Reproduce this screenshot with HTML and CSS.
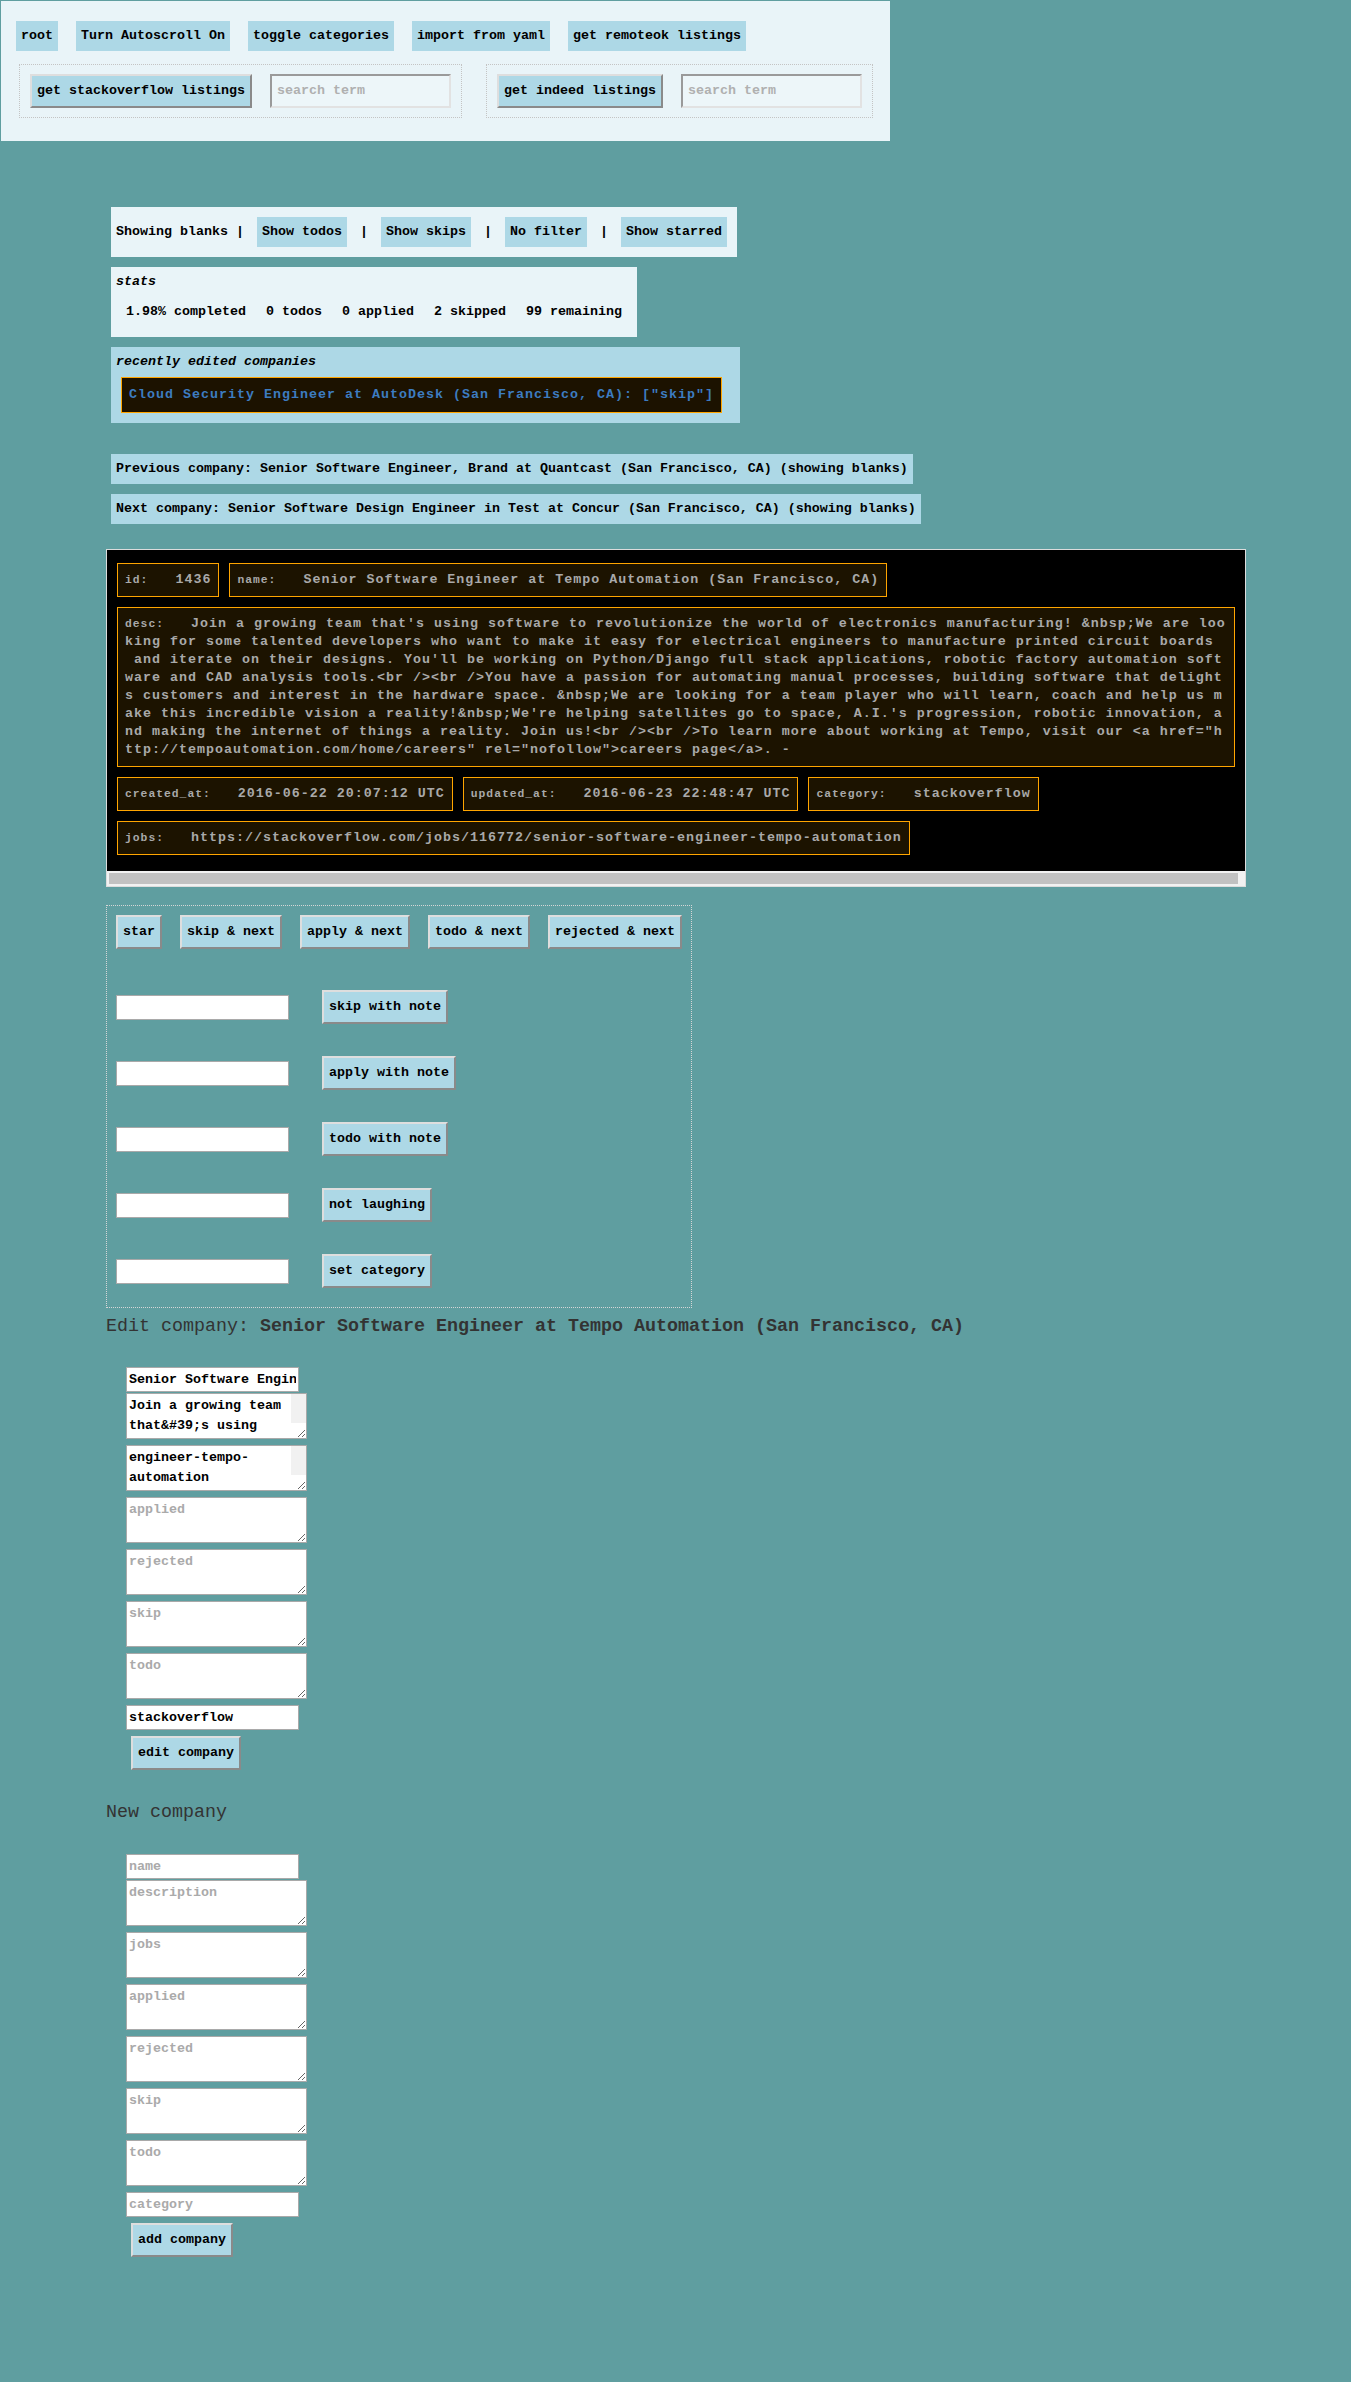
FILE: index.html
```html
<!DOCTYPE html>
<html lang="en">
<head>
<meta charset="utf-8">
<title>Companies</title>
<link rel="stylesheet" href="styles.css">
</head>
<body>
<div class="topbar">
  <div class="toprow">
    <button class="btn-flat">root</button>
    <button class="btn-flat">Turn Autoscroll On</button>
    <button class="btn-flat">toggle categories</button>
    <button class="btn-flat">import from yaml</button>
    <button class="btn-flat">get remoteok listings</button>
  </div>
  <div class="fetchrow">
    <form class="fetch">
      <button type="button" class="btn-raised">get stackoverflow listings</button>
      <input class="search" type="text" placeholder="search term">
    </form>
    <form class="fetch">
      <button type="button" class="btn-raised">get indeed listings</button>
      <input class="search" type="text" placeholder="search term">
    </form>
  </div>
</div>

<main class="main">
  <div class="filters">Showing blanks | <button class="btn-flat">Show todos</button> | <button class="btn-flat">Show skips</button> | <button class="btn-flat">No filter</button> | <button class="btn-flat">Show starred</button></div>

  <div class="stats">
    <div class="italic-title">stats</div>
    <div class="stats-row">
      <span>1.98% completed</span>
      <span>0 todos</span>
      <span>0 applied</span>
      <span>2 skipped</span>
      <span>99 remaining</span>
    </div>
  </div>

  <div class="recent">
    <div class="italic-title">recently edited companies</div>
    <div class="recent-item">Cloud Security Engineer at AutoDesk (San Francisco, CA): ["skip"]</div>
  </div>

  <div class="nav">Previous company: Senior Software Engineer, Brand at Quantcast (San Francisco, CA) (showing blanks)</div>
  <div class="nav nav-next">Next company: Senior Software Design Engineer in Test at Concur (San Francisco, CA) (showing blanks)</div>

  <div class="card">
    <div class="card-body">
      <div class="field"><span class="label">id:</span>   1436</div>
      <div class="field"><span class="label">name:</span>   Senior Software Engineer at Tempo Automation (San Francisco, CA)</div>
      <div class="field field-desc"><span class="label">desc:</span>   Join a growing team that's using software to revolutionize the world of electronics manufacturing! &amp;nbsp;We are looking for some talented developers who want to make it easy for electrical engineers to manufacture printed circuit boards  and iterate on their designs. You'll be working on Python/Django full stack applications, robotic factory automation software and CAD analysis tools.&lt;br /&gt;&lt;br /&gt;You have a passion for automating manual processes, building software that delights customers and interest in the hardware space. &amp;nbsp;We are looking for a team player who will learn, coach and help us make this incredible vision a reality!&amp;nbsp;We're helping satellites go to space, A.I.'s progression, robotic innovation, and making the internet of things a reality. Join us!&lt;br /&gt;&lt;br /&gt;To learn more about working at Tempo, visit our &lt;a href="http://tempoautomation.com/home/careers" rel="nofollow"&gt;careers page&lt;/a&gt;. -</div>
      <div class="field"><span class="label">created_at:</span>   2016-06-22 20:07:12 UTC</div>
      <div class="field"><span class="label">updated_at:</span>   2016-06-23 22:48:47 UTC</div>
      <div class="field"><span class="label">category:</span>   stackoverflow</div>
      <div class="field"><span class="label">jobs:</span>   https://stackoverflow.com/jobs/116772/senior-software-engineer-tempo-automation</div>
    </div>
    <div class="hscroll"><div class="hscroll-thumb"></div></div>
  </div>

  <div class="actions">
    <div class="action-buttons">
      <button class="btn-raised">star</button>
      <button class="btn-raised">skip &amp; next</button>
      <button class="btn-raised">apply &amp; next</button>
      <button class="btn-raised">todo &amp; next</button>
      <button class="btn-raised">rejected &amp; next</button>
    </div>
    <div class="note-rows">
      <form class="note-row"><input class="note-input" type="text"><button type="button" class="btn-raised">skip with note</button></form>
      <form class="note-row"><input class="note-input" type="text"><button type="button" class="btn-raised">apply with note</button></form>
      <form class="note-row"><input class="note-input" type="text"><button type="button" class="btn-raised">todo with note</button></form>
      <form class="note-row"><input class="note-input" type="text"><button type="button" class="btn-raised">not laughing</button></form>
      <form class="note-row"><input class="note-input" type="text"><button type="button" class="btn-raised">set category</button></form>
    </div>
  </div>

  <h3 class="heading heading-edit">Edit company: <b>Senior Software Engineer at Tempo Automation (San Francisco, CA)</b></h3>
  <form class="company-form form-edit">
    <input class="text-input" type="text" value="Senior Software Engineer at Tempo Automation (San Francisco, CA)">
    <textarea class="area area-scroll">Join a growing team that&amp;#39;s using software to revolutionize the world of electronics manufacturing! &amp;nbsp;We are looking for some talented developers who want to make it easy for electrical engineers to manufacture printed circuit boards and iterate on their designs.</textarea>
    <textarea class="area area-scroll scroll-end">https://stackoverflow.com/jobs/116772/senior-software-engineer-tempo-automation</textarea>
    <textarea class="area" placeholder="applied"></textarea>
    <textarea class="area" placeholder="rejected"></textarea>
    <textarea class="area" placeholder="skip"></textarea>
    <textarea class="area" placeholder="todo"></textarea>
    <input class="text-input" type="text" value="stackoverflow">
    <button type="button" class="btn-raised form-submit">edit company</button>
  </form>

  <h3 class="heading heading-new">New company</h3>
  <form class="company-form form-new">
    <input class="text-input" type="text" placeholder="name">
    <textarea class="area" placeholder="description"></textarea>
    <textarea class="area" placeholder="jobs"></textarea>
    <textarea class="area" placeholder="applied"></textarea>
    <textarea class="area" placeholder="rejected"></textarea>
    <textarea class="area" placeholder="skip"></textarea>
    <textarea class="area" placeholder="todo"></textarea>
    <input class="text-input" type="text" placeholder="category">
    <button type="button" class="btn-raised form-submit">add company</button>
  </form>
</main>
<script src="script.js"></script>
</body>
</html>
```

FILE: styles.css
```css
* {
  box-sizing: border-box;
}

html,
body {
  margin: 0;
}

body {
  background: #5f9ea0;
  font-family: "Liberation Mono", "DejaVu Sans Mono", monospace;
  font-size: 13.333px;
  font-weight: 700;
  line-height: 20px;
  color: #000;
  min-height: 2382px;
}

button,
input,
textarea {
  font-family: inherit;
  font-size: 13.333px;
  font-weight: 700;
  line-height: 20px;
  color: #000;
  margin: 0;
}

/* ---------- top panel ---------- */
.topbar {
  width: fit-content;
  margin: 1px 0 0 1px;
  padding: 20px 17px 23px 15px;
  background: #e9f4f8;
}

.toprow {
  display: flex;
  gap: 18px;
}

.btn-flat {
  background: #add8e6;
  border: 0;
  border-radius: 0;
  padding: 5px;
}

.btn-raised {
  background: #add8e6;
  border: 2px solid;
  border-color: #dedede #8a8a8a #8a8a8a #dedede;
  border-radius: 0;
  padding: 5px;
}

.fetchrow {
  display: flex;
  gap: 24px;
  margin: 13px 0 0 3px;
}

.fetch {
  display: flex;
  gap: 18px;
  border: 1px dotted #c4c4c4;
  padding: 9px 10px;
}

.search {
  width: 181px;
  border: 2px solid;
  border-color: #9a9a9a #e2e2e2 #e2e2e2 #9a9a9a;
  background: #edf6f9;
  padding: 0 5px;
}

.search::placeholder {
  color: #b0b0b0;
}

/* ---------- main column ---------- */
.main {
  width: 1140px;
  margin: 61px 0 0 106px;
  display: flex;
  flex-direction: column;
  align-items: flex-start;
}

.filters {
  margin: 5px 0 0 5px;
  padding: 5px;
  background: #e9f4f8;
}

.filters .btn-flat {
  margin: 5px;
}

.italic-title {
  font-style: italic;
}

.stats {
  margin: 10px 0 0 5px;
  padding: 5px 5px 5px;
  background: #e9f4f8;
}

.stats-row {
  display: flex;
  gap: 20px;
  padding: 10px;
}

.recent {
  margin: 10px 0 0 5px;
  padding: 5px 13px 5px 5px;
  background: #add8e6;
}

.recent-item {
  margin: 5px;
  padding: 7px;
  border: 1px solid #ffa500;
  background: #1c1200;
  color: #3d7cc0;
  letter-spacing: 1px;
}

.nav {
  margin: 31px 0 0 5px;
  padding: 5px;
  background: #add8e6;
}

.nav-next {
  margin-top: 10px;
}

/* ---------- company card ---------- */
.card {
  width: 1140px;
  margin-top: 25px;
  background: #000;
  border: 1px solid #dcdcdc;
}

.card-body {
  padding: 13px 10px 16px;
  display: flex;
  flex-wrap: wrap;
  gap: 10px;
}

.hscroll {
  height: 15px;
  background: #f1f1f1;
  padding: 2px 7px 2px 2px;
}

.hscroll-thumb {
  height: 11px;
  background: #c1c1c1;
}

.field {
  border: 1px solid #ffa500;
  background: #1c1300;
  color: #a9a9a9;
  padding: 7px;
  line-height: 18px;
  letter-spacing: 1px;
  white-space: break-spaces;
  word-break: break-all;
}

.field-desc {
  padding-right: 4px;
}

.label {
  font-size: 11.333px;
}

/* ---------- action box ---------- */
.actions {
  margin-top: 18px;
  border: 1px dotted #d6d6d6;
  padding: 9px 9px 19px;
}

.action-buttons {
  display: flex;
  gap: 18px;
}

.note-rows {
  margin-top: 41px;
  display: flex;
  flex-direction: column;
  gap: 32px;
}

.note-row {
  display: flex;
  align-items: center;
  gap: 33px;
}

.note-input,
.text-input {
  width: 173px;
  height: 25px;
  background: #fff;
  border: 1px solid #a9a9a9;
  padding: 0 2px;
}

/* ---------- forms ---------- */
.heading {
  margin: 8px 0 0;
  font-size: 18.333px;
  line-height: 22px;
  font-weight: 400;
  color: #333;
}

.heading b {
  font-weight: 700;
}

.heading-new {
  margin-top: 32px;
}

.company-form {
  margin: 29px 0 0 20px;
  display: flex;
  flex-direction: column;
  align-items: flex-start;
}

.form-new {
  margin-top: 30px;
}

.text-input {
  margin-bottom: 1px;
}

.area {
  display: block;
  width: 181px;
  height: 46px;
  border: 1px solid #a9a9a9;
  background: #fff;
  padding: 2px;
  margin-bottom: 6px;
}

.area-scroll {
  padding-right: 17px;
  background:
    linear-gradient(#fff, #fff) right bottom / 15px 15px no-repeat,
    linear-gradient(#f1f1f1, #f1f1f1) right top / 15px 100% no-repeat,
    #fff;
}

.text-input::placeholder,
.area::placeholder {
  color: #aaa;
}

.form-submit {
  margin: 5px 0 0 5px;
}
```

FILE: script.js
```js
document.querySelectorAll('.scroll-end').forEach(function (t) {
  t.scrollTop = t.scrollHeight;
});
```
